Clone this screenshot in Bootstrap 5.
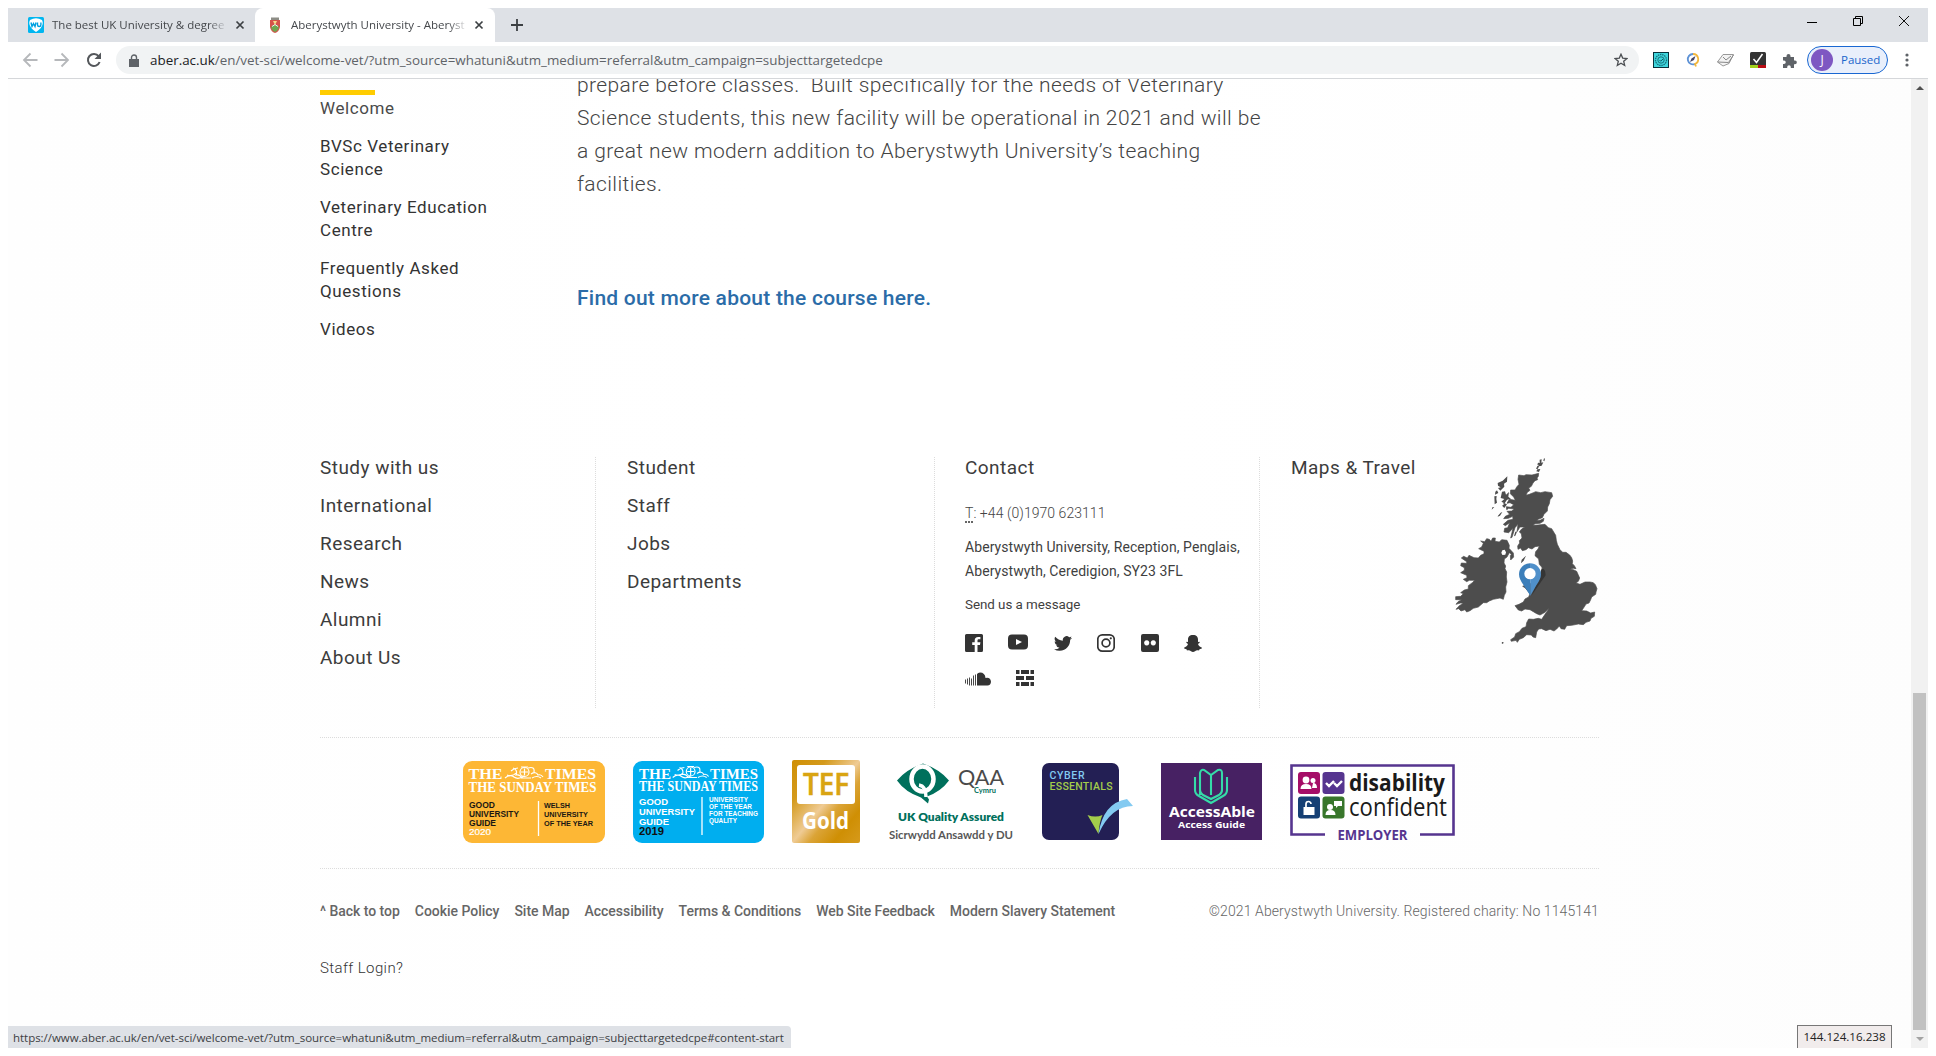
<!DOCTYPE html>
<html lang="en">
<head>
<meta charset="utf-8">
<meta name="viewport" content="width=device-width, initial-scale=1">
<title>Aberystwyth University - Aberystwyth University</title>
<link href="https://cdn.jsdelivr.net/npm/bootstrap@5.3.0/dist/css/bootstrap.min.css" rel="stylesheet">
<style>
  body { background: #fff; overflow: hidden; }
  a { color: inherit; text-decoration: none; }
  svg { display: block; flex: none; }
  .browser { width: 1920px; height: 1040px; margin: 8px; font-family: "Open Sans", sans-serif; }

  /* tab strip */
  .tabstrip { height: 34px; background: #dee1e6; }
  .tab-item { height: 34px; font-size: 11.5px; color: #45484c; }
  .tab-idle { width: 247px; padding: 0 10px 0 20px; }
  .tab-live { width: 240px; padding: 0 11px 0 14px; background: #fff; border-radius: 8px 8px 0 0; }
  .tab-title { overflow: hidden; white-space: nowrap; -webkit-mask-image: linear-gradient(90deg, #000 90%, transparent 101%); mask-image: linear-gradient(90deg, #000 90%, transparent 101%); }
  .tab-idle .tab-title { width: 174px; margin-left: 8px; }
  .tab-live .tab-title { width: 175px; margin-left: 10px; }
  .win-btns { gap: 34px; padding-right: 18px; }

  /* toolbar */
  .toolbar { height: 37px; border-bottom: 1px solid #d5d7da; padding: 0 19px 0 14px; }
  .omnibox { width: 1523px; height: 28px; background: #f1f3f4; border-radius: 14px; padding: 0 11px 0 13px; font-size: 13.4px; color: #5f6368; }
  .omnibox b { font-weight: 400; color: #202124; }
  .omnibox .url { margin-left: 11px; }
  .reload { margin: 0 14px 0 16px; }
  .exts { gap: 16px; }
  .profile { width: 81px; height: 28px; margin: 0 17px 0 10px; border: 1px solid #1967d2; border-radius: 14px; background: #e9effb; font-size: 11.5px; color: #1a66cc; }
  .profile-dot { width: 22px; height: 22px; margin: 0 8px 0 3px; background: #7e57c2; color: #fff; border-radius: 50%; font-size: 12px; }

  /* page */
  .viewport { height: 969px; background: linear-gradient(90deg, #fefefe 0, #fff 40%, #fff 60%, #fdfdfd 100%); }
  .site { width: 1903px; padding-left: 312px; font-family: Roboto, sans-serif; color: #555; }
  .scroller { width: 17px; background: #f1f1f1; }
  .thumb { width: 13px; height: 337px; background: #c1c1c1; }
  .upper { height: 378px; }
  .side-nav { width: 257px; padding-top: 11px; font-size: 17px; line-height: 23px; letter-spacing: .57px; color: #333; }
  .side-nav .marker { width: 55px; height: 5px; background: #fc0; margin-bottom: 2px; }
  .side-nav li { margin-bottom: 15px; }
  .side-nav .current { color: #4a4a4a; }
  .article { width: 700px; margin-top: -10px; font-size: 21px; line-height: 33px; letter-spacing: .385px; font-weight: 300; color: #444; }
  .article .more { margin-top: 81px; font-weight: 500; letter-spacing: .23px; color: #2b6ca8; }

  .foot { width: 1279px; }
  .foot-cols { height: 251px; }
  .foot-cols > div + div { border-left: 1px dotted #dcdcdc; }
  .foot-list { font-size: 19px; line-height: 22px; letter-spacing: .46px; color: #3c3c3c; }
  .foot-list li { margin-bottom: 16px; }
  .col-one { width: 275px; }
  .col-two { width: 339px; padding-left: 31px; }
  .col-three { width: 325px; padding-left: 30px; font-size: 14px; line-height: 24px; letter-spacing: .07px; color: #3f3f3f; }
  .col-four { width: 340px; padding-left: 31px; }
  .tel { margin-top: 22px; font-weight: 300; color: #444; letter-spacing: .05px; }
  .tel abbr { border-bottom: 2px dotted #666; text-decoration: none; line-height: 15px; display: inline-block; }
  .addr { margin-top: 10px; }
  .msg { margin-top: 10px; font-size: 13.4px; letter-spacing: -.05px; }
  .social { gap: 16px 25.4px; margin-top: 16px; width: 245px; height: 54px; fill: #333; }
  .social svg { height: 20px; }

  .logos { margin-top: 29px; height: 132px; border: 1px dotted #dcdcdc; border-width: 1px 0; gap: 28px; padding-left: 143px; padding-top: 22px; }
  .legal { margin-top: 32px; font-size: 14px; line-height: 20px; letter-spacing: -.03px; color: #666; }
  .legal nav { gap: 15px; font-weight: 500; }
  .legal .copy { font-weight: 300; letter-spacing: .11px; }
  .staff { margin-top: 37px; font-size: 15px; line-height: 20px; font-weight: 300; letter-spacing: .4px; color: #333; }

  /* overlays on the page */
  .statusbar { left: 0; bottom: 0; height: 22px; width: 783px; background: #dee1e6; border-radius: 0 4px 0 0; padding-left: 5px; font-size: 11.5px; line-height: 23px; letter-spacing: -.035px; color: #3c4043; white-space: nowrap; }
  .ipbox { right: 36px; bottom: 0; width: 95px; height: 23px; background: #f1ecec; border: 1px solid #777; border-bottom: 0; font-size: 11.6px; line-height: 22px; color: #222; }
</style>
</head>
<body>
<div class="browser position-relative d-flex flex-column">

  <header>
    <div class="tabstrip d-flex">
      <div class="tab-item tab-idle d-flex align-items-center">
        <svg width="16" height="16" viewBox="0 0 16 16"><rect width="16" height="16" rx="1.500" fill="#00b6f0"/><path d="M2 3Q8-.5 14 3 17 9 8 15-1 9 2 3" fill="#fff"/><path d="M3 5.500l1 4 1.500-3 1.500 3 1-4M9.500 5.500v2.200q0 1.800 1.700 1.800t1.700-1.800V5.500" fill="none" stroke="#00a0e0" stroke-width="1.400"/></svg>
        <span class="tab-title">The best UK University &amp; degree</span>
        <svg class="ms-auto" width="10" height="10" viewBox="0 0 10 10"><path d="M1.500 1.500l7 7M8.500 1.500l-7 7" stroke="#3c4043" stroke-width="1.700"/></svg>
      </div>
      <div class="tab-item tab-live d-flex align-items-center">
        <svg width="12" height="16" viewBox="0 0 12 16"><path d="M1 3h10v7q-1 5-5 6q-4-1-5-6z" fill="#d5524a"/><path d="M2 0.500h8v2.500H2z" fill="#8d8d86"/><path d="M2 10q4-5 8 0q-1 4-4 5q-3-1-4-5" fill="#6da651"/><path d="M4 4h4l-2 4z" fill="#f7dc8a"/><path d="M3 9.500l3-2 3 2" stroke="#eee" fill="none"/></svg>
        <span class="tab-title">Aberystwyth University - Aberyst</span>
        <svg class="ms-auto" width="10" height="10" viewBox="0 0 10 10"><path d="M1.500 1.500l7 7M8.500 1.500l-7 7" stroke="#3c4043" stroke-width="1.700"/></svg>
      </div>
      <svg class="align-self-center ms-3" width="12" height="12" viewBox="0 0 12 12"><path d="M6 0v12M0 6h12" stroke="#3c4043" stroke-width="1.800"/></svg>
      <div class="win-btns ms-auto d-flex align-items-center mb-2">
        <svg width="12" height="12" viewBox="0 0 12 12"><path d="M1 7.500h10" stroke="#000"/></svg>
        <svg width="12" height="12" viewBox="0 0 12 12"><path d="M1.500 3.500h7v7h-7zM3.500 3.500v-2h7v7h-2" fill="none" stroke="#000"/></svg>
        <svg width="12" height="12" viewBox="0 0 12 12"><path d="M1 1l10 10M11 1L1 11" stroke="#111"/></svg>
      </div>
    </div>
    <div class="toolbar d-flex align-items-center">
      <svg width="16" height="16" viewBox="0 0 16 16"><path d="M15.500 8H2M8.500 1.500L2 8l6.500 6.500" fill="none" stroke="#b6b8bb" stroke-width="1.800"/></svg>
      <svg class="ms-3" width="16" height="16" viewBox="0 0 16 16"><path d="M.5 8H14M7.500 1.500L14 8l-6.500 6.500" fill="none" stroke="#b6b8bb" stroke-width="1.800"/></svg>
      <svg class="reload" width="16" height="16" viewBox="0 0 16 16"><path d="M13.600 10A6 6 0 1 1 12.700 4.300" fill="none" stroke="#54575b" stroke-width="2"/><path d="M15 .5v6.500H8.500z" fill="#54575b"/></svg>
      <div class="omnibox d-flex align-items-center">
        <svg width="10" height="13" viewBox="0 0 10 13"><path d="M0 5h10v8H0z" fill="#5f6368"/><path d="M2.500 6V3.500a2.500 2.500 0 0 1 5 0V6" fill="none" stroke="#5f6368" stroke-width="1.400"/></svg>
        <span class="url"><b>aber.ac.uk</b>/en/vet-sci/welcome-vet/?utm_source=whatuni&amp;utm_medium=referral&amp;utm_campaign=subjecttargetedcpe</span>
        <svg class="ms-auto" width="14" height="14" viewBox="0 0 14 14"><path d="M7 1.200l1.700 3.900 4.200.4-3.200 2.800 1 4.200L7 10.300l-3.700 2.200 1-4.200L1.100 5.500l4.200-.4z" fill="none" stroke="#4b4e52" stroke-width="1.300"/></svg>
      </div>
      <div class="exts d-flex align-items-center ms-auto">
        <svg width="16" height="16" viewBox="0 0 16 16"><rect x=".5" y=".5" width="15" height="15" fill="#3fd6dd" stroke="#08323c"/><circle cx="8" cy="8" r="5.500" fill="none" stroke="#17717b" stroke-width="1.300" stroke-dasharray="1.500 .7"/><circle cx="8" cy="8" r="3.200" fill="none" stroke="#17717b"/><path d="M6.500 8l1.200 1.200L10 7" stroke="#0b5963" fill="none"/></svg>
        <svg width="16" height="16" viewBox="0 0 16 16"><path d="M8 2a5.200 5.200 0 1 0 2 10" fill="none" stroke="#5f93d6" stroke-width="1.800"/><path d="M8 2a5.200 5.200 0 0 1 2 10l1 2.500" fill="none" stroke="#f2b63b" stroke-width="1.800"/><path d="M5 10l1.500-3.500L10.500 4 9 8z" fill="#446"/></svg>
        <svg width="17" height="16" viewBox="0 0 17 16"><path d="M.5 10L6 2.500h10.500L12 11.500l-6 2.500z" fill="#f3f3f3" stroke="#999"/><path d="M.5 10l11 .5L16.500 3M6 5l3 3 5-4" fill="none" stroke="#888"/></svg>
        <svg width="16" height="16" viewBox="0 0 16 16"><rect width="16" height="16" rx="1.500" fill="#333"/><path d="M0 13h8v3H0z" fill="#a2d01c"/><path d="M8 13h8v3H8z" fill="#b90d14"/><path d="M3.500 7l3 3.500L12.500 2" fill="none" stroke="#fff" stroke-width="1.500"/></svg>
        <svg width="15" height="15" viewBox="0 0 15 15"><path d="M1 4h3.500V3a2 2 0 0 1 4 0v1H12v3.500h1a1.800 1.800 0 0 1 0 3.700h-1V15H8.800v-1a1.800 1.800 0 0 0-3.600 0v1H1v-4h1a1.700 1.700 0 0 0 0-3.500H1z" fill="#5f6368"/></svg>
      </div>
      <div class="profile d-flex align-items-center"><span class="profile-dot d-flex align-items-center justify-content-center">J</span><span>Paused</span></div>
      <svg width="4" height="14" viewBox="0 0 4 14" fill="#5f6368"><circle cx="2" cy="2" r="1.600"/><circle cx="2" cy="7" r="1.600"/><circle cx="2" cy="12" r="1.600"/></svg>
    </div>
  </header>

  <div class="viewport d-flex overflow-hidden">
    <div class="site">
      <div class="upper d-flex">
        <nav class="side-nav">
          <div class="marker"></div>
          <ul class="list-unstyled mb-0">
            <li><a href="#" class="current">Welcome</a></li>
            <li><a href="#">BVSc Veterinary<br>Science</a></li>
            <li><a href="#">Veterinary Education<br>Centre</a></li>
            <li><a href="#">Frequently Asked<br>Questions</a></li>
            <li><a href="#">Videos</a></li>
          </ul>
        </nav>
        <main class="article">
          <p class="mb-0">prepare before classes.&nbsp; Built specifically for the needs of Veterinary<br>Science students, this new facility will be operational in 2021 and will be<br>a great new modern addition to Aberystwyth University’s teaching<br>facilities.</p>
          <p class="more"><a href="#">Find out more about the course here.</a></p>
        </main>
      </div>

      <footer class="foot">
        <div class="foot-cols d-flex">
          <div class="col-one">
            <ul class="foot-list list-unstyled"><li>Study with us</li><li>International</li><li>Research</li><li>News</li><li>Alumni</li><li>About Us</li></ul>
          </div>
          <div class="col-two">
            <ul class="foot-list list-unstyled"><li>Student</li><li>Staff</li><li>Jobs</li><li>Departments</li></ul>
          </div>
          <div class="col-three">
            <div class="foot-list">Contact</div>
            <div class="tel"><abbr>T</abbr>: +44 (0)1970 623111</div>
            <div class="addr">Aberystwyth University, Reception, Penglais,<br>Aberystwyth, Ceredigion, SY23 3FL</div>
            <div class="msg"><a href="#">Send us a message</a></div>
            <div class="social d-flex flex-wrap">
              <svg width="18" viewBox="0 0 18 20"><path fill-rule="evenodd" d="M1.500 1h15A1.500 1.500 0 0 1 18 2.500v15a1.500 1.500 0 0 1-1.500 1.500h-4v-7H15l.4-2.700h-2.900V7.600c0-.9.400-1.300 1.400-1.300h1.500V4h-2.200c-2.400 0-3.500 1.400-3.500 3.500v1.800H7.200V12h2.500v7H1.500A1.500 1.500 0 0 1 0 17.500v-15A1.500 1.500 0 0 1 1.500 1z"/></svg>
              <svg width="20" viewBox="0 0 20 20"><path fill-rule="evenodd" d="M4 1.500h12q4 0 4 4v7q0 4-4 4H4q-4 0-4-4v-7q0-4 4-4zM8 6v6l6-3z"/></svg>
              <svg width="18" viewBox="0 -.7 16 17.500"><path d="M5.026 15c6.038 0 9.341-5.003 9.341-9.334 0-.14 0-.282-.006-.422A6.685 6.685 0 0 0 16 3.542a6.658 6.658 0 0 1-1.889.518 3.301 3.301 0 0 0 1.447-1.817 6.533 6.533 0 0 1-2.087.793A3.286 3.286 0 0 0 7.875 6.030a9.325 9.325 0 0 1-6.767-3.429 3.289 3.289 0 0 0 1.018 4.382A3.323 3.323 0 0 1 .64 6.575v.045a3.288 3.288 0 0 0 2.632 3.218 3.203 3.203 0 0 1-.865.115 3.230 3.230 0 0 1-.614-.057 3.283 3.283 0 0 0 3.067 2.277A6.588 6.588 0 0 1 .78 13.580a6.320 6.320 0 0 1-.78-.045A9.344 9.344 0 0 0 5.026 15z"/></svg>
              <svg width="18" viewBox="0 0 18 20"><rect x=".8" y="1.800" width="16.400" height="16.400" rx="4.500" fill="none" stroke="#333" stroke-width="1.700"/><circle cx="9" cy="10" r="3.900" fill="none" stroke="#333" stroke-width="1.700"/><circle cx="13.800" cy="5.300" r="1.100"/></svg>
              <svg width="18" viewBox="0 0 18 20"><path fill-rule="evenodd" d="M2 1h14q2 0 2 2v14q0 2-2 2H2q-2 0-2-2V3q0-2 2-2zM5.700 7.300a2.600 2.600 0 1 0 .01 0zM12.300 7.300a2.600 2.600 0 1 0 .01 0z"/></svg>
              <svg width="18" viewBox="0 0 18 20"><path d="M9 2C5.500 2 4 4 4 6.500V9L2.500 8.800 2.300 9.800 4 11C3.500 12.800 2 14 0 14.800 0 16 1.500 16 2.500 16.200L3 17.500C5 17 6 17.500 7 18.300 8.300 19.200 9.700 19.200 11 18.300 12 17.500 13 17 15 17.500L15.500 16.200C16.500 16 18 16 18 14.800 16 14 14.500 12.800 14 11L15.700 9.800 15.500 8.800 14 9V6.500C14 4 12.500 2 9 2z"/></svg>
              <svg width="26" viewBox="0 0 26 20"><path d="M12 5q1-1.500 3-1.500 5 0 5.500 5.500 5-1 5.500 3.700-.2 3.600-3.500 3.800H12z"/><path d="M.5 10.500v4M2.500 9.500v6M4.500 8.500v8M6.500 9.500v7M8.500 6.500v10M10.500 5.500v11" stroke="#333" stroke-width=".9"/></svg>
              <svg width="18" viewBox="0 0 18 20"><path d="M0 1h3.500v4H0zM5 1h8v4H5zM14.500 1H18v4h-3.500zM0 7h8v4H0zM10 7h8v4h-8zM0 13h3.500v4H0zM5 13h8v4H5zM14.500 13H18v4h-3.500z"/></svg>
            </div>
          </div>
          <div class="col-four d-flex">
            <div class="foot-list">Maps &amp; Travel</div>
            <svg class="ms-auto" width="145" height="188" viewBox="552 50 435 564" fill="#4d4d4d">
              <path stroke="#4d4d4d" stroke-width="2" stroke-linejoin="round" d="M746 104L762 106 768 103 786 104 806 99 805 108 801 113 803 118 795 121 789 128 784 138 776 143 780 150 772 156 768 165 778 162 790 157 797 154 812 157 825 154 845 157 848 168 840 178 838 190 833 200 832 212 822 222 817 232 806 236 800 241 812 239 822 234 820 243 810 249 795 250 789 255 804 254 825 252 835 262 845 265 851 275 857 285 859 300 862 312 870 328 878 336 888 336 899 344 905 352 908 362 907 370 913 376 918 385 910 384 900 387 910 388 920 393 924 402 929 413 925 423 918 428 930 432 945 425 960 425 970 427 976 433 981 445 978 455 977 462 965 470 962 478 957 488 948 491 944 498 935 511 950 512 962 518 974 515 973 528 963 534 960 542 948 546 940 553 925 551 905 555 890 556 884 567 873 565 868 557 860 566 852 572 840 567 828 571 815 565 806 566 800 575 797 592 789 590 784 584 770 583 760 592 748 597 742 606 738 600 724 603 722 598 734 590 737 580 748 574 756 564 768 559 770 547 776 536 790 537 805 534 815 537 825 522 838 504 825 516 810 524 800 520 790 514 780 508 765 506 755 512 745 509 735 496 747 492 760 485 765 476 776 470 780 460 765 442 758 438 774 430 792 428 812 410 821 392 815 380 808 372 806 356 795 346 797 334 804 326 808 317 795 319 786 326 775 322 768 328 757 331 752 323 744 327 743 317 749 308 748 301 756 293 754 280 748 275 755 266 764 260 750 260 741 274 744 252 735 262 726 291 722 293 729 264 716 277 702 275 704 264 713 262 719 247 706 256 700 252 714 240 729 237 728 228 715 234 701 235 706 228 719 222 711 213 725 212 733 206 716 204 710 208 709 199 723 201 731 193 720 187 711 189 718 177 736 180 731 170 721 160 722 149 735 149 740 140 747 132 744 117z"/>
              <path stroke="#4d4d4d" stroke-width="2" stroke-linejoin="round" d="M626 325L635 320 640 309 632 302 644 304 650 295 658 297 663 303 668 293 676 293 675 303 688 305 695 298 711 300 718 315 717 324 730 338 731 350 722 359 721 346 724 342 718 337 711 350 703 356 702 368 707 377 705 385 710 395 709 410 711 425 707 440 708 455 703 465 700 477 690 473 670 477 658 482 650 487 640 487 625 500 610 504 600 511 590 515 585 508 573 512 566 505 558 507 568 496 580 489 572 488 558 492 564 484 575 478 557 478 557 469 572 468 580 460 572 457 583 449 595 446 595 436 607 427 614 420 598 420 590 424 580 417 591 412 590 405 572 397 583 390 583 382 572 376 574 368 590 369 590 364 574 353 581 348 592 353 597 345 612 352 625 353 632 345 642 340 642 333z"/>
              <path d="M697 330l7-2 4 8-2 7-9 1-3-7z" fill="#fff"/>
              <path d="M712 108L711 124 702 130 703 139 691 151 684 143 692 141 684 136 683 128 698 121zM681 150L685 158 675 163 676 154zM673 168l7-1-1 9 2 11-7 5zM667 201l6-1-8 8zM696 154l9-1 3 10 9-8-2 14 8 7-12 2-7 11-10-5 9-8-11-3zM700 187l11 5-8 11-7-7 5-3zM684 226l8-9 5-2-7 11-7 3zM741 274l-5 12-4 2 4-14zM768 346l-7 15-8 8 2-11zM809 58l6-1-1 10 6-1-5 10-8 2-4 9 8-1-4 9-8-2 4-8-5 1 4-9 6-3-6-1 2-6 5 1zM822 54l3 1-2 8-3-2zM696 605l5 1-2 5-4-2z"/>
              <path d="M784 466L827 405Q827 386 815 384L803 423z" fill="#353535"/>
              <path d="M780 369a33 33 0 0 0-33 33q0 14 14 33l20 31z" fill="#3c7fba"/><path d="M780 369a33 33 0 0 1 33 33q0 14-14 33l-18 31z" fill="#5090ca"/><circle cx="780" cy="400" r="17" fill="#fff"/>
            </svg>
          </div>
        </div>

        <div class="logos d-flex align-items-start">
          <svg width="142" height="84" viewBox="0 0 142 84"><rect y="1" width="142" height="82" rx="9" fill="#fdb735"/>
            <g fill="#fff" font-family="Liberation Serif" font-weight="700" font-size="15"><text x="5.500" y="19" textLength="34" lengthAdjust="spacingAndGlyphs">THE</text><text x="82" y="19" textLength="51" lengthAdjust="spacingAndGlyphs">TIMES</text><text x="5.500" y="32" textLength="128" font-size="14.500" lengthAdjust="spacingAndGlyphs">THE SUNDAY TIMES</text></g>
            <g fill="none" stroke="#fff" stroke-width="1.200"><path d="M42 18q5-4 9-1t10-1M44 15q6 2 9-2M50 8q5 2 3 7 4-1 6 3M48 11q3-3 7-3M69 18q5-3 9 0M68 14q5-3 7 1 3-1 5 2M65 8q7-2 6 4M58 18h10"/><circle cx="61.500" cy="12" r="4.500"/><path d="M61.500 8.500v7M58 12h7M58 7h7"/></g>
            <g fill="#1a1713" font-family="Liberation Sans" font-weight="700" font-size="9"><text x="6" y="47.500" textLength="26" lengthAdjust="spacingAndGlyphs">GOOD</text><text x="6" y="56.500" textLength="50" lengthAdjust="spacingAndGlyphs">UNIVERSITY</text><text x="6" y="65.500" textLength="27" lengthAdjust="spacingAndGlyphs">GUIDE</text><text x="6" y="74.500" textLength="22" lengthAdjust="spacingAndGlyphs" font-weight="400" stroke="#fff" stroke-width=".2" fill="#fff">2020</text><g font-size="8"><text x="81" y="47.500" textLength="26" lengthAdjust="spacingAndGlyphs">WELSH</text><text x="81" y="56.500" textLength="44" lengthAdjust="spacingAndGlyphs">UNIVERSITY</text><text x="81" y="65.500" textLength="49" lengthAdjust="spacingAndGlyphs">OF THE YEAR</text></g></g><path d="M75.500 41v35" stroke="#fff" stroke-width="1.300"/></svg>
          <svg width="131" height="84" viewBox="0 0 131 84"><rect y="1" width="131" height="82" rx="9" fill="#00aeef"/>
            <g fill="#fff" font-family="Liberation Serif" font-weight="700" font-size="14"><text x="6" y="18.500" textLength="32" lengthAdjust="spacingAndGlyphs">THE</text><text x="77" y="18.500" textLength="48" lengthAdjust="spacingAndGlyphs">TIMES</text><text x="6" y="30.500" textLength="119" font-size="14" lengthAdjust="spacingAndGlyphs">THE SUNDAY TIMES</text></g>
            <g transform="translate(-2 -.5) scale(.97 1)" fill="none" stroke="#fff" stroke-width="1.200"><path d="M43 18q5-4 9-1t10-1M45 15q6 2 9-2M50 8q5 2 3 7 4-1 6 3M48 11q3-3 7-3M69 18q5-3 9 0M68 14q5-3 7 1 3-1 5 2M65 8q7-2 6 4M58 18h10"/><circle cx="61.500" cy="12" r="4.500"/><path d="M61.500 8.500v7M58 12h7M58 7h7"/></g>
            <g fill="#fff" font-family="Liberation Sans" font-weight="700" font-size="9.500"><text x="6" y="44.500" textLength="29" lengthAdjust="spacingAndGlyphs">GOOD</text><text x="6" y="54.500" textLength="56" lengthAdjust="spacingAndGlyphs">UNIVERSITY</text><text x="6" y="64.500" textLength="30" lengthAdjust="spacingAndGlyphs">GUIDE</text><text x="6" y="74.500" textLength="25" lengthAdjust="spacingAndGlyphs" font-size="10" fill="#111">2019</text><g font-size="6.800"><text x="76" y="41.500" textLength="39" lengthAdjust="spacingAndGlyphs">UNIVERSITY</text><text x="76" y="48.500" textLength="43" lengthAdjust="spacingAndGlyphs">OF THE YEAR</text><text x="76" y="55.500" textLength="49" lengthAdjust="spacingAndGlyphs">FOR TEACHING</text><text x="76" y="62.500" textLength="28" lengthAdjust="spacingAndGlyphs">QUALITY</text></g></g><path d="M69 37v38" stroke="#fff" stroke-width="1.300"/></svg>
          <svg width="69" height="84" viewBox="0 0 69 84"><defs><linearGradient id="gold" x1="0" y1="0" x2="1" y2="1"><stop offset="0" stop-color="#cf8f04"/><stop offset=".25" stop-color="#d49a1c"/><stop offset=".5" stop-color="#efcb94"/><stop offset=".62" stop-color="#dba437"/><stop offset=".8" stop-color="#cf8f04"/><stop offset="1" stop-color="#d69a1c"/></linearGradient></defs><rect width="68" height="83" rx="2" fill="url(#gold)"/><rect x="5" y="5" width="58" height="39" rx="3" fill="#fff"/><text x="11" y="34.500" font-family="Open Sans" font-weight="600" font-size="30" textLength="46" lengthAdjust="spacingAndGlyphs" fill="#d9a412" stroke="#d9a412" stroke-width=".6">TEF</text><text x="10" y="69" font-family="Open Sans" font-weight="700" font-size="23" textLength="47" lengthAdjust="spacingAndGlyphs" fill="#fff">Gold</text></svg>
          <svg width="125" height="84" viewBox="0 0 125 84"><path d="M34 3.500q17 6 26 17-8 11-22 16l2 3-1 4-7-6Q16 32 8 20.500q9-11 26-17z" fill="#00705c"/><ellipse cx="33.500" cy="19" rx="11" ry="12.500" fill="none" stroke="#fff" stroke-width="4.500"/><path d="M30 25q7 1 7 12" fill="none" stroke="#fff" stroke-width="3.500"/><text x="69" y="24.500" font-family="Lato" font-size="21.500" textLength="46" lengthAdjust="spacingAndGlyphs" fill="#4a4a4a">QAA</text><text x="85" y="33" font-family="Lato" font-weight="700" font-size="8" textLength="22" lengthAdjust="spacingAndGlyphs" fill="#00705c">Cymru</text><text x="9" y="60.500" font-family="Lato" font-weight="800" font-size="11.500" textLength="106" lengthAdjust="spacingAndGlyphs" fill="#00705c">UK Quality Assured</text><text x="0" y="78.500" font-family="Lato" font-weight="700" font-size="11" textLength="124" lengthAdjust="spacingAndGlyphs" fill="#575757">Sicrwydd Ansawdd y DU</text></svg>
          <svg width="91" height="84" viewBox="0 0 91 84"><rect y="3" width="77" height="77" rx="7" fill="#231f54"/><g font-family="Roboto" font-weight="500" font-size="10.500"><text x="7.500" y="19" textLength="35" fill="#83caf1">CYBER</text><text x="7.500" y="29.500" textLength="63" fill="#a3cd4b">ESSENTIALS</text></g><path d="M45.500 55q8 3 15 0-3 6-4 19z" fill="#a3cd4b"/><path d="M56.500 74Q61 43 85 39l6 7Q69 46 56.500 74z" fill="#83caf1"/></svg>
          <svg width="101" height="84" viewBox="0 0 101 84"><rect y="3" width="101" height="77" fill="#472163"/><path d="M39 35V13q1-4 4-3l7 5 7-5q4-1 4 3v17q0 3-3 5l-8 4-8-4q-3-2-3-5M50 15v20M34 17v13q0 4 4 6l12 7 12-7q4-2 4-6V17" fill="none" stroke="#35dba8" stroke-width="2.100"/><g fill="#fff" font-family="Open Sans" font-weight="700"><text x="8" y="56.500" font-size="14.500" textLength="86" lengthAdjust="spacingAndGlyphs">AccessAble</text><text x="17" y="68" font-size="9.500" textLength="67" lengthAdjust="spacingAndGlyphs">Access Guide</text></g></svg>
          <svg width="165" height="84" viewBox="0 0 165 84"><path d="M35 74.500H1.500v-69h162v69H130" fill="none" stroke="#56358f" stroke-width="2.600"/><rect x="8" y="12" width="22" height="22" rx="3" fill="#a50d67"/><rect x="32.500" y="12" width="22" height="22" rx="3" fill="#56358f"/><rect x="8" y="36.500" width="22" height="22" rx="3" fill="#153f74"/><rect x="32.500" y="36.500" width="22" height="22" rx="3" fill="#38762b"/>
            <g fill="#fff"><circle cx="16" cy="20" r="3.400"/><path d="M10.500 29q0-5 5.500-5t5.500 5zM22 28h5q0-5-4-5z"/><circle cx="23" cy="20.500" r="2.500"/><path d="M13.500 47h11v8h-11z"/><circle cx="40" cy="47" r="3"/><path d="M35.500 55q0-5 5-5t5 5zM44 41h8v5h-4l-2 2v-2h-2z"/></g><path d="M16 47v-3a2.500 2.500 0 0 1 5 0" fill="none" stroke="#fff" stroke-width="1.700"/><path d="M36 23l3 3 5-5M44 23l3 3 5-5" fill="none" stroke="#fff" stroke-width="2.400"/>
            <text x="59" y="31" font-family="Open Sans" font-weight="700" font-size="24" textLength="96" lengthAdjust="spacingAndGlyphs" fill="#1a1a1a">disability</text><text x="59" y="56" font-family="Open Sans" font-size="25" textLength="98" lengthAdjust="spacingAndGlyphs" fill="#1a1a1a">confident</text><text x="47.500" y="79.500" font-family="Open Sans" font-weight="700" font-size="14" textLength="70" lengthAdjust="spacingAndGlyphs" fill="#56358f">EMPLOYER</text></svg>
        </div>

        <div class="legal d-flex justify-content-between">
          <nav class="d-flex"><a href="#">^ Back to top</a><a href="#">Cookie Policy</a><a href="#">Site Map</a><a href="#">Accessibility</a><a href="#">Terms &amp; Conditions</a><a href="#">Web Site Feedback</a><a href="#">Modern Slavery Statement</a></nav>
          <span class="copy">©2021 Aberystwyth University. Registered charity: No 1145141</span>
        </div>
        <div class="staff">Staff Login?</div>
      </footer>
    </div>
    <div class="scroller d-flex flex-column align-items-center">
      <svg class="mt-1" width="8" height="9" viewBox="0 0 8 9"><path d="M0 7l4-4 4 4z" fill="#505050"/></svg>
      <div class="thumb mt-auto"></div>
      <svg class="my-1" width="8" height="10" viewBox="0 0 8 10"><path d="M0 3l4 4 4-4z" fill="#a3a3a3"/></svg>
    </div>
  </div>

  <div class="statusbar position-absolute">https://www.aber.ac.uk/en/vet-sci/welcome-vet/?utm_source=whatuni&amp;utm_medium=referral&amp;utm_campaign=subjecttargetedcpe#content-start</div>
  <div class="ipbox position-absolute text-center">144.124.16.238</div>
</div>
<script src="https://cdn.jsdelivr.net/npm/bootstrap@5.3.0/dist/js/bootstrap.bundle.min.js"></script>
</body>
</html>
